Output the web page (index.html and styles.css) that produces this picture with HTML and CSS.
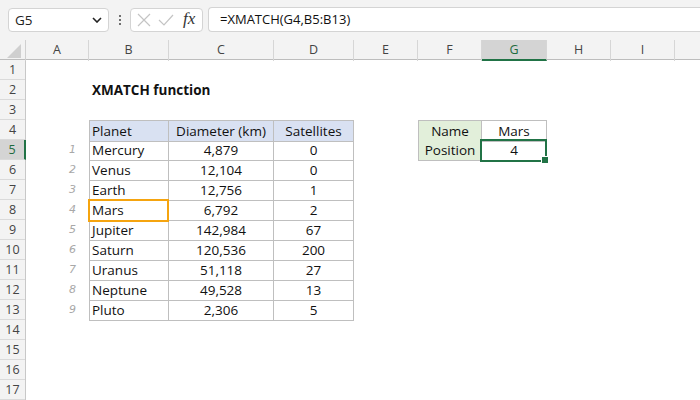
FILE: index.html
```html
<!DOCTYPE html>
<html lang="en">

<head>
    <meta charset="UTF-8">
    <title>XMATCH function</title>
    <link rel="stylesheet" href="styles.css">
</head>

<body>
    <header class="toolbar">
        <div class="namebox">
            <span>G5</span>
            <svg class="chev" width="10" height="6" viewBox="0 0 10 6"><path d="M1 1l4 4 4-4" fill="none" stroke="#222" stroke-width="1.6"/></svg>
        </div>
        <div class="dots"><i></i><i></i><i></i></div>
        <div class="fxbox">
            <svg width="14" height="14" viewBox="0 0 14 14"><path d="M1 1l12 12M13 1L1 13" stroke="#c4c4c4" stroke-width="1.2"/></svg>
            <svg width="16" height="14" viewBox="0 0 16 14"><path d="M1 7l5 5L15 2" fill="none" stroke="#c4c4c4" stroke-width="1.2"/></svg>
            <span class="fx">fx</span>
        </div>
        <div class="formula">=XMATCH(G4,B5:B13)</div>
    </header>

    <div class="colheads">
        <div class="corner"><span class="tri"></span></div>
        <div class="ch">A</div>
        <div class="ch">B</div>
        <div class="ch">C</div>
        <div class="ch">D</div>
        <div class="ch">E</div>
        <div class="ch">F</div>
        <div class="ch active">G</div>
        <div class="ch">H</div>
        <div class="ch">I</div>
        <div class="ch"></div>
    </div>

    <main class="sheet">
        <div class="rowheads">
            <div>1</div><div>2</div><div>3</div><div>4</div>
            <div class="active">5</div>
            <div>6</div><div>7</div><div>8</div><div>9</div><div>10</div>
            <div>11</div><div>12</div><div>13</div><div>14</div><div>15</div>
            <div>16</div><div>17</div>
        </div>
        <div class="cells">
            <div class="row"></div>
            <div class="row"><div class="title">XMATCH function</div></div>
            <div class="row"></div>
            <div class="row">
                <div></div>
                <div class="tb th first">Planet</div>
                <div class="tb th mid">Diameter (km)</div>
                <div class="tb th mid">Satellites</div>
                <div></div>
                <div class="side lbl top">Name</div>
                <div class="side top">Mars</div>
            </div>
            <div class="row">
                <div class="hand">1</div>
                <div class="tb first">Mercury</div>
                <div class="tb mid">4,879</div>
                <div class="tb mid">0</div>
                <div></div>
                <div class="side lbl">Position</div>
                <div class="side sel">4</div>
            </div>
            <div class="row">
                <div class="hand">2</div>
                <div class="tb first">Venus</div>
                <div class="tb mid">12,104</div>
                <div class="tb mid">0</div>
            </div>
            <div class="row">
                <div class="hand">3</div>
                <div class="tb first">Earth</div>
                <div class="tb mid">12,756</div>
                <div class="tb mid">1</div>
            </div>
            <div class="row">
                <div class="hand">4</div>
                <div class="tb first found">Mars</div>
                <div class="tb mid">6,792</div>
                <div class="tb mid">2</div>
            </div>
            <div class="row">
                <div class="hand">5</div>
                <div class="tb first">Jupiter</div>
                <div class="tb mid">142,984</div>
                <div class="tb mid">67</div>
            </div>
            <div class="row">
                <div class="hand">6</div>
                <div class="tb first">Saturn</div>
                <div class="tb mid">120,536</div>
                <div class="tb mid">200</div>
            </div>
            <div class="row">
                <div class="hand">7</div>
                <div class="tb first">Uranus</div>
                <div class="tb mid">51,118</div>
                <div class="tb mid">27</div>
            </div>
            <div class="row">
                <div class="hand">8</div>
                <div class="tb first">Neptune</div>
                <div class="tb mid">49,528</div>
                <div class="tb mid">13</div>
            </div>
            <div class="row">
                <div class="hand">9</div>
                <div class="tb first">Pluto</div>
                <div class="tb mid">2,306</div>
                <div class="tb mid">5</div>
            </div>
            <div class="row"></div>
            <div class="row"></div>
            <div class="row"></div>
            <div class="row"></div>
        </div>
    </main>
</body>

</html>
```

FILE: styles.css
```css
* {
    box-sizing: border-box;
}

body {
    margin: 0;
    width: 700px;
    height: 400px;
    overflow: hidden;
    background-color: white;
    font-family: "Open Sans", "Liberation Sans", sans-serif;
    color: #111;
}

/* formula bar */
.toolbar {
    height: 40px;
    background-color: #f3f3f3;
    display: flex;
    align-items: flex-start;
    padding-top: 8px;
    padding-left: 8px;
}

.namebox {
    width: 101px;
    height: 24px;
    background-color: white;
    border: 1px solid #d4d4d4;
    border-radius: 4px;
    display: flex;
    align-items: center;
    justify-content: space-between;
    padding: 0 6px 0 6px;
    font-size: 13.5px;
    color: #222;
}

.dots {
    width: 21px;
    height: 24px;
    display: flex;
    flex-direction: column;
    align-items: center;
    justify-content: center;
    gap: 2px;
}

.dots i {
    width: 2px;
    height: 2px;
    background-color: #444;
    border-radius: 1px;
}

.fxbox {
    width: 73px;
    height: 24px;
    background-color: white;
    border: 1px solid #d4d4d4;
    border-radius: 4px;
    display: flex;
    align-items: center;
    gap: 7px;
    padding-left: 6px;
}

.fx {
    font-family: "Liberation Serif", serif;
    font-style: italic;
    font-size: 17px;
    color: #333;
    margin-left: 2px;
    margin-top: -2px;
}

.formula {
    flex: 1;
    height: 25px;
    margin-top: -1px;
    margin-left: 5px;
    background-color: white;
    border: 1px solid #d4d4d4;
    border-right: none;
    border-radius: 4px 0 0 4px;
    padding-left: 11px;
    line-height: 23px;
    font-size: 13px;
    color: #111;
}

/* column headers */
.colheads {
    height: 20px;
    background-color: #f3f3f3;
    border-bottom: 1px solid #bdbdbd;
    display: grid;
    grid-template-columns: 26px 63px 80px 105px 80px 64px 64px 65px 64px 64px 30px;
}

.corner {
    position: relative;
    border-right: 1px solid #d0d0d0;
}

.tri {
    position: absolute;
    right: 4px;
    bottom: 3px;
    width: 0;
    height: 0;
    border-left: 14px solid transparent;
    border-bottom: 14px solid #cfcfcf;
}

.ch {
    border-right: 1px solid #d6d6d6;
    text-align: center;
    font-size: 12.5px;
    line-height: 19px;
    color: #444;
}

.ch.active {
    background-color: #d4d4d4;
    border-bottom: 2px solid #217346;
    color: #1d6b3e;
}

/* grid */
.sheet {
    display: flex;
}

.rowheads {
    width: 26px;
    background-color: #f3f3f3;
    border-right: 1px solid #c8c8c8;
}

.rowheads div {
    height: 20px;
    border-bottom: 1px solid #dadada;
    text-align: center;
    font-size: 12.5px;
    line-height: 20px;
    color: #444;
}

.rowheads div.active {
    background-color: #d4d4d4;
    border-right: 2px solid #217346;
    margin-right: -1px;
    color: #1d6b3e;
}

.cells {
    flex: 1;
}

.row {
    height: 20px;
    display: grid;
    grid-template-columns: 63px 80px 105px 80px 64px 64px 65px;
    font-size: 13.5px;
    line-height: 20px;
}

.title {
    grid-column: 2 / 5;
    padding-left: 3px;
    font-weight: bold;
    font-size: 13.5px;
    white-space: nowrap;
}

.hand {
    text-align: right;
    padding-right: 13px;
    font-family: "DejaVu Sans", sans-serif;
    font-style: italic;
    font-size: 11px;
    color: #a8a8a8;
}

.tb {
    border-right: 1px solid #bfbfbf;
    border-bottom: 1px solid #bfbfbf;
    white-space: nowrap;
}

.tb.first {
    border-left: 1px solid #bfbfbf;
    padding-left: 2px;
}

.tb.mid {
    text-align: center;
}

.tb.th {
    background-color: #d9e1f2;
    border-top: 1px solid #bfbfbf;
}

.side {
    border-right: 1px solid #bfbfbf;
    border-bottom: 1px solid #bfbfbf;
    text-align: center;
}

.side.lbl {
    background-color: #e2efda;
    border-left: 1px solid #bfbfbf;
}

.side.top {
    border-top: 1px solid #bfbfbf;
}

.found,
.sel {
    position: relative;
}

.found::after {
    content: "";
    position: absolute;
    left: -2px;
    top: -1px;
    right: -1px;
    bottom: -2px;
    border: 2px solid #f5a40f;
}

.sel::after {
    content: "";
    position: absolute;
    left: -2px;
    top: -1px;
    right: -1px;
    bottom: -2px;
    border: 2px solid #217346;
}

.sel::before {
    content: "";
    position: absolute;
    right: -3px;
    bottom: -4px;
    width: 6px;
    height: 6px;
    background-color: #217346;
    border: 1px solid white;
    z-index: 1;
}
```
